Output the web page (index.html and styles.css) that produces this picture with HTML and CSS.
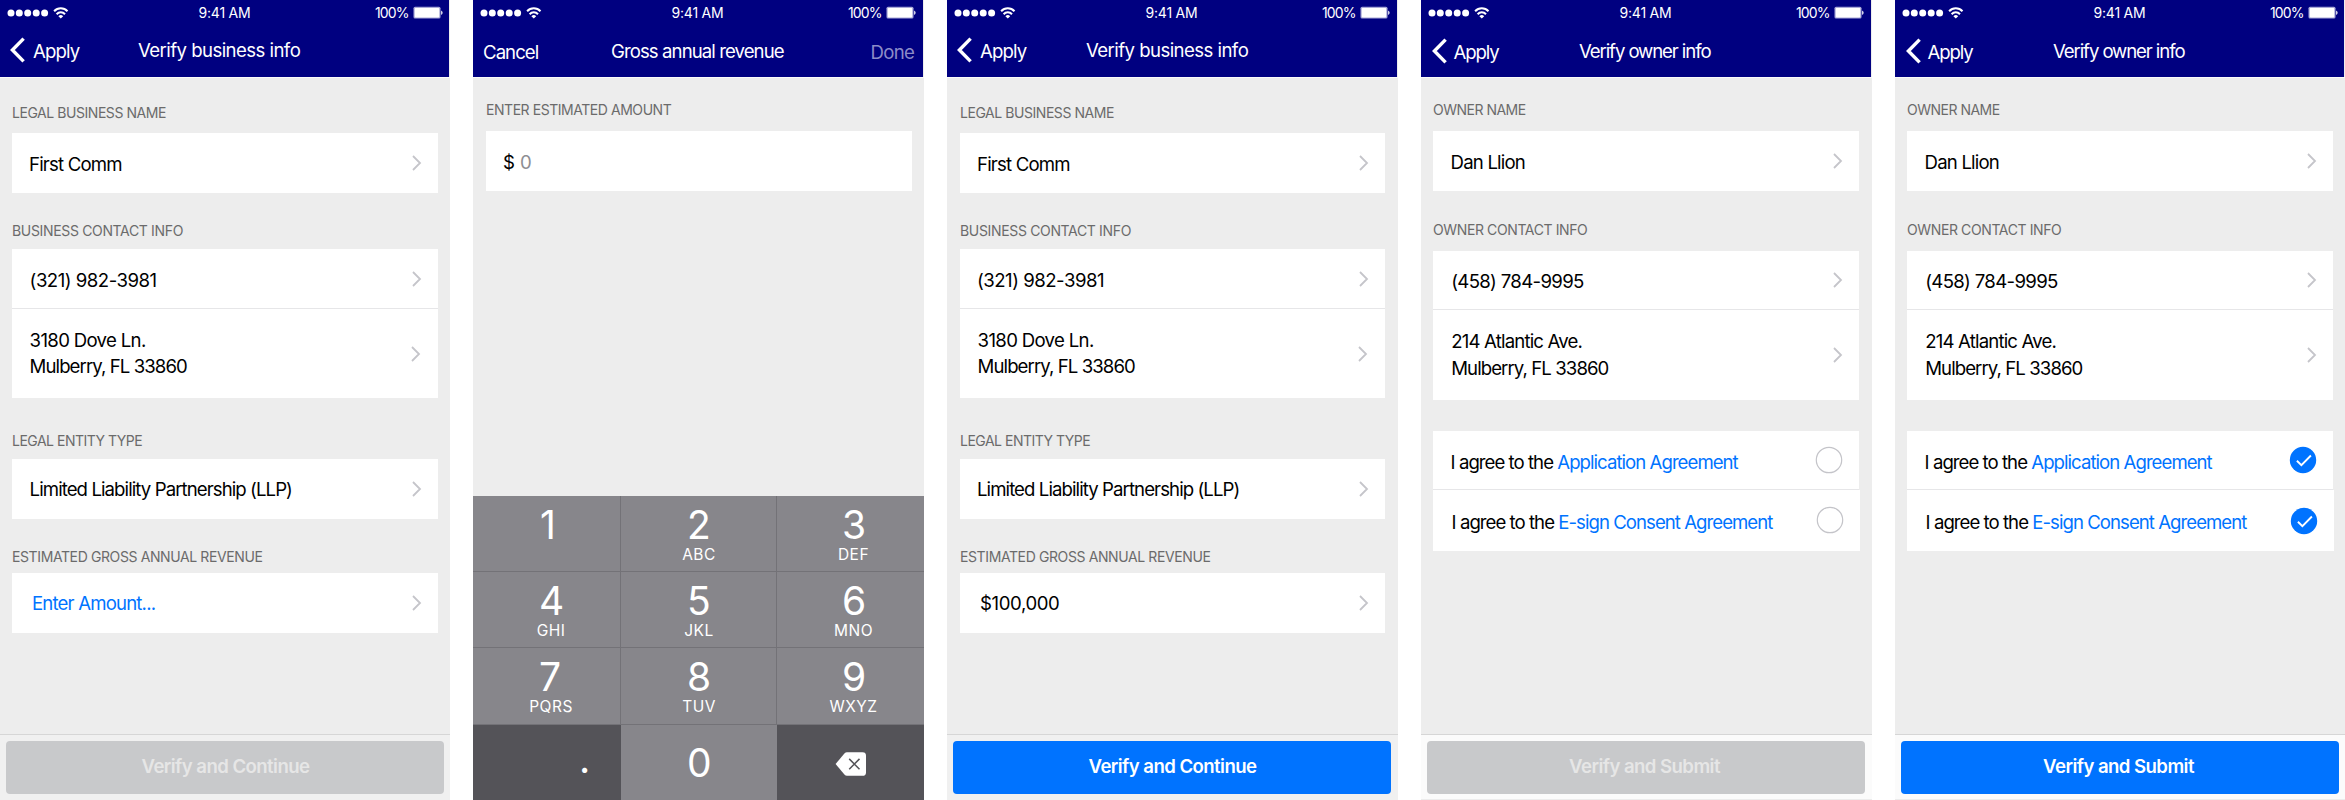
FILE: index.html
```
<!DOCTYPE html>
<html lang="en">
<head>
<meta charset="utf-8">
<title>Verify info</title>
<link rel="stylesheet" href="styles.css">
</head>
<body>
<svg class="defs" aria-hidden="true">
  <symbol id="signal" viewBox="0 0 62 14">
    <g fill="#fff"><circle cx="4" cy="6.9" r="3.5"/><circle cx="12.3" cy="6.9" r="3.5"/><circle cx="20.7" cy="6.9" r="3.5"/><circle cx="29.2" cy="6.9" r="3.5"/><circle cx="37.6" cy="6.9" r="3.5"/></g>
    <g fill="none" stroke="#fff" stroke-width="2"><path d="M47.100 5.200a9.300 9.300 0 0 1 13.400 0"/><path d="M49.600 8.200a5.700 5.700 0 0 1 8.400 0"/></g>
    <path d="M51.4 10.300a3.300 3.300 0 0 1 4.800 0l-2.400 2.300z" fill="#fff"/>
  </symbol>
  <symbol id="battery" viewBox="0 0 31 14">
    <rect x=".5" y=".7" width="27" height="11.9" rx="1.6" fill="#a9a9d8"/>
    <rect x="1.7" y="1.9" width="24.6" height="9.5" rx=".8" fill="#fff"/>
    <path d="M28.2 4.4a2.6 2.6 0 0 1 0 4.6z" fill="#fff"/>
  </symbol>
  <symbol id="back" viewBox="0 0 16 26"><path d="M13.6 1.6 2.4 13l11.2 11.4" fill="none" stroke="#fff" stroke-width="3.4"/></symbol>
  <symbol id="next" viewBox="0 0 10 16"><path d="M1 1l7 7-7 7" fill="none" stroke="#c5c5ca" stroke-width="1.8"/></symbol>
  <symbol id="empty" viewBox="0 0 28 28"><circle cx="14" cy="14" r="12.7" fill="#fff" stroke="#c4c4c9" stroke-width="1.2"/></symbol>
  <symbol id="checked" viewBox="0 0 28 28"><circle cx="14" cy="14" r="13.2" fill="#0073ff"/><path d="M7.9 14.7l4.5 4.4 9.5-9.6" fill="none" stroke="#fff" stroke-width="1.9"/></symbol>
  <symbol id="erase" viewBox="0 0 32 24"><path d="M.6 12 9.4 1.4Q10.5.2 12 .2h15.500Q31 .2 31 3.600v16.800Q31 23.800 27.500 23.800H12q-1.500 0-2.600-1.200z" fill="#fff"/><path d="M14.200 6.900l10.300 10.300M24.500 6.900 14.200 17.200" stroke="#545358" stroke-width="1.500"/></symbol>
</svg>

<main class="board">

  <section class="screen business">
    <header class="header">
      <div class="status"><svg class="signal"><use href="#signal"/></svg><span class="time">9:41 AM</span><span class="percent">100%</span><svg class="battery"><use href="#battery"/></svg></div>
      <nav class="nav"><a class="back"><svg class="back-icon"><use href="#back"/></svg><span class="back-text">Apply</span></a><h1 class="title ls-55">Verify business info</h1></nav>
    </header>
    <div class="body">
      <h2 class="label ls-45 l-name">Legal Business Name</h2>
      <div class="card"><div class="row"><span class="text low ls-80">First Comm</span><svg class="next"><use href="#next"/></svg></div></div>
      <h2 class="label ls-32 l-contact">Business Contact Info</h2>
      <div class="card">
        <div class="row divided"><span class="text low ls-50 nudge">(321) 982-3981</span><svg class="next"><use href="#next"/></svg></div>
        <div class="row tall"><span class="text address"><span class="ls-67">3180 Dove Ln.</span><br><span class="ls-92">Mulberry, FL 33860</span></span><svg class="next inset"><use href="#next"/></svg></div>
      </div>
      <h2 class="label ls-50 l-entity">Legal Entity Type</h2>
      <div class="card"><div class="row"><span class="text ls-92 nudge">Limited Liability Partnership (LLP)</span><svg class="next"><use href="#next"/></svg></div></div>
      <h2 class="label ls-39 l-revenue">Estimated Gross Annual Revenue</h2>
      <div class="card"><div class="row"><span class="text link indent ls-80">Enter Amount...</span><svg class="next"><use href="#next"/></svg></div></div>
    </div>
    <footer class="footer"><button class="button disabled">Verify and Continue</button></footer>
  </section>

  <section class="screen amount">
    <header class="header">
      <div class="status"><svg class="signal"><use href="#signal"/></svg><span class="time">9:41 AM</span><span class="percent">100%</span><svg class="battery"><use href="#battery"/></svg></div>
      <nav class="nav"><a class="cancel">Cancel</a><h1 class="title low ls-92">Gross annual revenue</h1><a class="done">Done</a></nav>
    </header>
    <div class="body">
      <h2 class="label ls-45 l-owner">Enter Estimated Amount</h2>
      <div class="card"><div class="row"><span class="text low money"><span>$</span><span class="zero">0</span></span></div></div>
    </div>
    <div class="keypad">
      <div class="key"><b>1</b></div>
      <div class="key"><b>2</b><i>ABC</i></div>
      <div class="key"><b>3</b><i>DEF</i></div>
      <div class="key"><b>4</b><i>GHI</i></div>
      <div class="key"><b>5</b><i>JKL</i></div>
      <div class="key"><b>6</b><i>MNO</i></div>
      <div class="key"><b>7</b><i>PQRS</i></div>
      <div class="key"><b>8</b><i>TUV</i></div>
      <div class="key"><b>9</b><i>WXYZ</i></div>
      <div class="key dark point"><b>.</b></div>
      <div class="key last"><b>0</b></div>
      <div class="key dark delete"><svg class="erase"><use href="#erase"/></svg></div>
    </div>
  </section>

  <section class="screen business offset">
    <header class="header">
      <div class="status"><svg class="signal"><use href="#signal"/></svg><span class="time">9:41 AM</span><span class="percent">100%</span><svg class="battery"><use href="#battery"/></svg></div>
      <nav class="nav"><a class="back"><svg class="back-icon"><use href="#back"/></svg><span class="back-text">Apply</span></a><h1 class="title ls-55">Verify business info</h1></nav>
    </header>
    <div class="body">
      <h2 class="label ls-45 l-name">Legal Business Name</h2>
      <div class="card"><div class="row"><span class="text low ls-80">First Comm</span><svg class="next"><use href="#next"/></svg></div></div>
      <h2 class="label ls-32 l-contact">Business Contact Info</h2>
      <div class="card">
        <div class="row divided"><span class="text low ls-50">(321) 982-3981</span><svg class="next"><use href="#next"/></svg></div>
        <div class="row tall"><span class="text address"><span class="ls-67">3180 Dove Ln.</span><br><span class="ls-92">Mulberry, FL 33860</span></span><svg class="next inset"><use href="#next"/></svg></div>
      </div>
      <h2 class="label ls-50 l-entity">Legal Entity Type</h2>
      <div class="card"><div class="row"><span class="text ls-92">Limited Liability Partnership (LLP)</span><svg class="next"><use href="#next"/></svg></div></div>
      <h2 class="label ls-39 l-revenue">Estimated Gross Annual Revenue</h2>
      <div class="card"><div class="row"><span class="text indent ls-39">$100,000</span><svg class="next"><use href="#next"/></svg></div></div>
    </div>
    <footer class="footer"><button class="button">Verify and Continue</button></footer>
  </section>

  <section class="screen owner">
    <header class="header">
      <div class="status"><svg class="signal"><use href="#signal"/></svg><span class="time">9:41 AM</span><span class="percent">100%</span><svg class="battery"><use href="#battery"/></svg></div>
      <nav class="nav"><a class="back"><svg class="back-icon"><use href="#back"/></svg><span class="back-text">Apply</span></a><h1 class="title low ls-110">Verify owner info</h1></nav>
    </header>
    <div class="body">
      <h2 class="label ls-50 l-owner">Owner Name</h2>
      <div class="card"><div class="row"><span class="text low ls-80">Dan Llion</span><svg class="next"><use href="#next"/></svg></div></div>
      <h2 class="label ls-39 l-owner-contact">Owner Contact Info</h2>
      <div class="card">
        <div class="row divided"><span class="text low ls-67 nudge">(458) 784-9995</span><svg class="next"><use href="#next"/></svg></div>
        <div class="row tall"><span class="text address"><span class="ls-80">214 Atlantic Ave.</span><br><span class="ls-92">Mulberry, FL 33860</span></span><svg class="next"><use href="#next"/></svg></div>
      </div>
      <div class="card agreements">
        <div class="row divided"><span class="text lower ls-96">I agree to the <a class="link">Application Agreement</a></span><svg class="radio"><use href="#empty"/></svg></div>
        <div class="row"><span class="text low ls-96">I agree to the <a class="link">E-sign Consent Agreement</a></span><svg class="radio raised"><use href="#empty"/></svg></div>
      </div>
    </div>
    <footer class="footer"><button class="button disabled submit">Verify and Submit</button></footer>
  </section>

  <section class="screen owner">
    <header class="header">
      <div class="status"><svg class="signal"><use href="#signal"/></svg><span class="time">9:41 AM</span><span class="percent">100%</span><svg class="battery"><use href="#battery"/></svg></div>
      <nav class="nav"><a class="back"><svg class="back-icon"><use href="#back"/></svg><span class="back-text">Apply</span></a><h1 class="title low ls-110">Verify owner info</h1></nav>
    </header>
    <div class="body">
      <h2 class="label ls-50 l-owner">Owner Name</h2>
      <div class="card"><div class="row"><span class="text low ls-80">Dan Llion</span><svg class="next"><use href="#next"/></svg></div></div>
      <h2 class="label ls-39 l-owner-contact">Owner Contact Info</h2>
      <div class="card">
        <div class="row divided"><span class="text low ls-67 nudge">(458) 784-9995</span><svg class="next"><use href="#next"/></svg></div>
        <div class="row tall"><span class="text address"><span class="ls-80">214 Atlantic Ave.</span><br><span class="ls-92">Mulberry, FL 33860</span></span><svg class="next"><use href="#next"/></svg></div>
      </div>
      <div class="card agreements">
        <div class="row divided"><span class="text lower ls-96">I agree to the <a class="link">Application Agreement</a></span><svg class="radio"><use href="#checked"/></svg></div>
        <div class="row"><span class="text low ls-96">I agree to the <a class="link">E-sign Consent Agreement</a></span><svg class="radio"><use href="#checked"/></svg></div>
      </div>
    </div>
    <footer class="footer"><button class="button submit">Verify and Submit</button></footer>
  </section>

</main>
</body>
</html>
```
FILE: styles.css
```
* { box-sizing: border-box; }
body {
  margin: 0;
  background: #fff;
  color: #000;
  font: 400 18.6px/26px Inter, "Liberation Sans", sans-serif;
}
h1, h2 { margin: 0; font: inherit; }
svg { display: block; flex: none; }
.defs { display: none; }

/* letter spacing steps */
.ls-32 { letter-spacing: -.34px; }
.ls-39 { letter-spacing: -.39px; }
.ls-45 { letter-spacing: -.45px; }
.ls-50 { letter-spacing: -.5px; }
.ls-55 { letter-spacing: -.56px; }
.ls-67 { letter-spacing: -.67px; }
.ls-80 { letter-spacing: -.82px; }
.ls-92 { letter-spacing: -.92px; }
.ls-96 { letter-spacing: -.96px; }
.ls-110 { letter-spacing: -1.1px; }

.board {
  display: grid;
  grid-template-columns: 450px 451px 451px 451px 450px;
  column-gap: 23px;
  width: 2345px;
  height: 800px;
  overflow: hidden;
}
.screen {
  display: flex;
  flex-direction: column;
  height: 800px;
  background: #ededed;
}

/* header */
.header {
  height: 77px;
  flex: none;
  margin-right: 1px;
  background: #000080;
  color: #fff;
}
.status {
  display: grid;
  grid-template-columns: 191px 177px 37px 31px;
  height: 26px;
  padding-left: 7px;
  align-items: center;
  font-size: 14px;
  white-space: nowrap;
}
.signal { width: 62px; height: 14px; margin-top: -1px; }
.time { padding-left: .5px; letter-spacing: -.2px; }
.percent { letter-spacing: -.85px; }
.battery { width: 31px; height: 14px; margin-top: -1px; margin-left: 1px; }
.nav {
  display: grid;
  grid-template-columns: 138px 1fr auto;
  height: 50px;
}
.back { display: flex; gap: 7px; padding: 11px 0 0 10px; }
.back-icon { width: 16px; height: 26px; }
.back-text { letter-spacing: -.87px; padding-top: 1px; }
.title { padding-top: 11px; white-space: nowrap; }
.title.low { padding-top: 12px; }
.offset .nav { grid-template-columns: 139px 1fr; }
.cancel { padding: 13px 0 0 10px; letter-spacing: -.95px; }
.done { padding: 13px 9px 0 0; letter-spacing: -.75px; color: #8c8cc8; }
.owner .nav { grid-template-columns: 158px 1fr; }
.owner .back { gap: 6px; padding-top: 12px; padding-left: 10.500px; }
.owner .back-text { letter-spacing: -1.1px; }

/* form */
.body { flex: 1; padding: 0 12px; border-top: 1px solid #fafafa; }
.amount .body { padding-left: 13px; }
.offset .body { padding-left: 13px; }
.label {
  height: 20px;
  font-size: 14px;
  line-height: 20px;
  color: #6b6b6b;
  text-transform: uppercase;
  white-space: nowrap;
}
.l-name { margin: 25px 0 10px; }
.l-contact { margin: 28px 0 8px; }
.l-entity { margin: 33px 0 8px; }
.l-revenue { margin: 28px 0 6px; }
.l-owner { margin: 22px 0 11px; }
.l-owner-contact { margin: 29px 0 11px; }

.card { width: 426px; background: #fff; }
.offset .card { width: 425px; }
.row {
  display: flex;
  align-items: center;
  justify-content: space-between;
  height: 60px;
  padding: 0 4px 0 17px;
  white-space: nowrap;
}
.row.divided { border-bottom: 1px solid #e6e6e8; }
.row.tall { height: 89px; }
.text.low { padding-top: 2px; }
.text.lower { padding-top: 4px; }
.text.indent { padding-left: 3px; }
.text.nudge { padding-left: .6px; }
.text.address { padding: 0 0 1px .6px; line-height: 26.500px; }
.link { color: #0073ff; }
.next { width: 10px; height: 16px; margin-right: 12px; }
.next.inset { margin-right: 13px; }
.money { display: flex; gap: 5px; }
.zero { color: #8e8e93; }

.owner .row { padding-left: 17.600px; }
.owner .row.divided { height: 59px; }
.owner .row.tall { height: 90px; }
.agreements { margin-top: 31px; }
.agreements .row:last-child { width: 426px; height: 61px; margin-left: 1px; background: #fff; }
.radio { width: 28px; height: 28px; margin-right: 12px; }
.radio.raised { margin-bottom: 2px; }

/* footer */
.footer {
  flex: none;
  height: 66px;
  padding: 6px 6px 0;
  border-top: 1px solid #d6d6d6;
  background: #f0f0f0;
}
.owner .footer { background: #fbfbfb; border-bottom: 1px solid #ececec; }
.button {
  display: block;
  width: 438px;
  height: 53px;
  padding: 0 0 3px 1px;
  border: 0;
  border-radius: 4px;
  background: #0073ff;
  color: #fff;
  font: 600 18.6px/26px Inter, "Liberation Sans", sans-serif;
  letter-spacing: -.56px;
}
.button.submit { padding-left: 0; padding-right: 3px; }
.button.disabled { background: #c8c9cb; color: #e6e6e6; }

/* keypad */
.keypad {
  display: grid;
  flex: none;
  grid-template-columns: 148px 156px 147px;
  grid-template-rows: 76px 76px 77px 75px;
  height: 304px;
}
.key {
  display: flex;
  flex-direction: column;
  overflow: hidden;
  padding: 9px 0 0;
  background: #87868b;
  border-right: 1px solid #737277;
  border-bottom: 1px solid #737277;
  color: #fff;
}
.key:nth-child(3n) { border-right: 0; }
.key:nth-child(n+10) { border: 0; }
.key b {
  padding-left: 66px;
  font-size: 39px;
  font-weight: 400;
  line-height: 40px;
}
.key:first-child b { padding-left: 67px; }
.key i {
  width: 156px;
  font-size: 15.500px;
  font-style: normal;
  line-height: 20px;
  letter-spacing: .5px;
  text-align: center;
}
.key:nth-child(3n) b { padding-left: 65px; }
.key:nth-child(3n) i { width: 153px; }
.key.dark { background: #545358; }
.key.last { padding-top: 18px; }
.key.point { padding-top: 14px; }
.key.point b { padding-left: 106px; }
.key.delete { padding: 27px 0 0 58px; }
.erase { width: 32px; height: 24px; }
```
